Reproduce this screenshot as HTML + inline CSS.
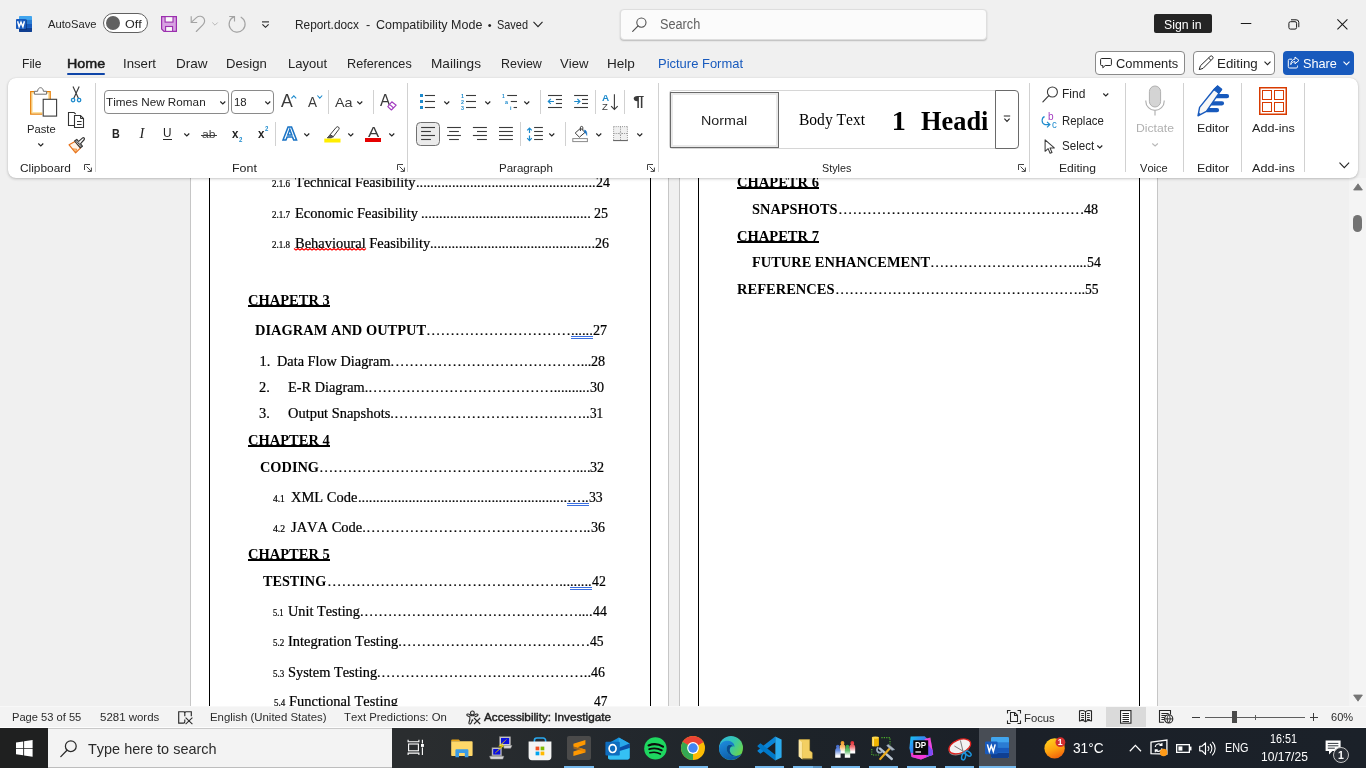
<!DOCTYPE html>
<html lang="en"><head><meta charset="utf-8"><title>Report.docx - Word</title>
<style>
*{box-sizing:border-box;margin:0;padding:0}
html,body{width:1366px;height:768px;overflow:hidden;background:#f0f0f0}
body{position:relative;font-family:"Liberation Sans",sans-serif;font-size:12px;color:#242424;font-kerning:none;will-change:transform}
div,svg,.t,main,header,section,footer,nav{position:absolute}
.t{white-space:pre;display:block;transform-origin:0 0}
svg{overflow:visible}
</style></head>
<body>
<main id="document" style="left:0;top:0;width:1366px;height:768px">
<div style="left:0px;top:178px;width:1366px;height:528px;background:#f0f0f0;"></div>
<div style="left:190px;top:150px;width:479px;height:600px;background:#fff;border:1px solid #c6c6c6;"></div>
<div style="left:679px;top:150px;width:479px;height:600px;background:#fff;border:1px solid #c6c6c6;"></div>
<div style="left:209px;top:150px;width:1px;height:600px;background:#000;"></div>
<div style="left:650px;top:150px;width:1px;height:600px;background:#000;"></div>
<div style="left:698px;top:150px;width:1px;height:600px;background:#000;"></div>
<div style="left:1139px;top:150px;width:1px;height:600px;background:#000;"></div>
<span class="t" style="left:272.20px;top:179.00px;font-size:10px;line-height:10px;font-family:'Liberation Serif',serif;color:#000;transform:scaleX(0.9000);-webkit-text-stroke:0.22px #000;">2.1.6</span>
<span class="t" style="left:295.30px;top:175.00px;font-size:14.4px;line-height:14.4px;font-family:'Liberation Serif',serif;color:#000;transform:scaleX(0.9934);-webkit-text-stroke:0.22px #000;">Technical Feasibility</span>
<span class="t" style="left:415.80px;top:175.00px;font-size:14.4px;line-height:14.4px;font-family:'Liberation Serif',serif;color:#000;transform:scaleX(0.9984);-webkit-text-stroke:0.22px #000;">..................................................</span>
<span class="t" style="left:595.60px;top:175.00px;font-size:14.4px;line-height:14.4px;font-family:'Liberation Serif',serif;color:#000;transform:scaleX(0.9659);-webkit-text-stroke:0.22px #000;">24</span>
<span class="t" style="left:272.20px;top:210.00px;font-size:10px;line-height:10px;font-family:'Liberation Serif',serif;color:#000;transform:scaleX(0.9000);-webkit-text-stroke:0.22px #000;">2.1.7</span>
<span class="t" style="left:294.50px;top:206.00px;font-size:14.4px;line-height:14.4px;font-family:'Liberation Serif',serif;color:#000;transform:scaleX(1.0016);-webkit-text-stroke:0.22px #000;">Economic Feasibility</span>
<span class="t" style="left:421.00px;top:206.00px;font-size:14.4px;line-height:14.4px;font-family:'Liberation Serif',serif;color:#000;transform:scaleX(1.0042);-webkit-text-stroke:0.22px #000;">...............................................</span>
<span class="t" style="left:594.30px;top:206.00px;font-size:14.4px;line-height:14.4px;font-family:'Liberation Serif',serif;color:#000;transform:scaleX(0.9729);-webkit-text-stroke:0.22px #000;">25</span>
<span class="t" style="left:272.20px;top:240.00px;font-size:10px;line-height:10px;font-family:'Liberation Serif',serif;color:#000;transform:scaleX(0.9000);-webkit-text-stroke:0.22px #000;">2.1.8</span>
<span class="t" style="left:294.50px;top:236.00px;font-size:14.4px;line-height:14.4px;font-family:'Liberation Serif',serif;color:#000;transform:scaleX(1.0045);-webkit-text-stroke:0.22px #000;">Behavioural Feasibility</span>
<span class="t" style="left:430.00px;top:236.00px;font-size:14.4px;line-height:14.4px;font-family:'Liberation Serif',serif;color:#000;transform:scaleX(0.9970);-webkit-text-stroke:0.22px #000;">..............................................</span>
<span class="t" style="left:595.20px;top:236.00px;font-size:14.4px;line-height:14.4px;font-family:'Liberation Serif',serif;color:#000;transform:scaleX(0.9729);-webkit-text-stroke:0.22px #000;">26</span>
<svg style="left:0px;top:0px;" width="1366" height="768" viewBox="0 0 1366 768"><polyline points="294.0 248.5 296.0 250.1 298.0 248.5 300.0 250.1 302.0 248.5 304.0 250.1 306.0 248.5 308.0 250.1 310.0 248.5 312.0 250.1 314.0 248.5 316.0 250.1 318.0 248.5 320.0 250.1 322.0 248.5 324.0 250.1 326.0 248.5 328.0 250.1 330.0 248.5 332.0 250.1 334.0 248.5 336.0 250.1 338.0 248.5 340.0 250.1 342.0 248.5 344.0 250.1 346.0 248.5 348.0 250.1 350.0 248.5 352.0 250.1 354.0 248.5 356.0 250.1 358.0 248.5 360.0 250.1 362.0 248.5 364.0 250.1 366.0 248.5" fill="none" stroke="#ff0000" stroke-width="1.15" stroke-linejoin="round"/></svg>
<span class="t" style="left:248.00px;top:293.00px;font-size:14.4px;line-height:14.4px;font-family:'Liberation Serif',serif;color:#000;font-weight:700;transform:scaleX(1.0079);">CHAPETR 3</span>
<div style="left:248px;top:305.1px;width:81.80000000000001px;height:1.8px;background:#000;"></div>
<span class="t" style="left:255.00px;top:323.00px;font-size:14.4px;line-height:14.4px;font-family:'Liberation Serif',serif;color:#000;font-weight:700;transform:scaleX(1.0053);">DIAGRAM AND OUTPUT</span>
<span class="t" style="left:426.40px;top:323.00px;font-size:14.4px;line-height:14.4px;font-family:'Liberation Serif',serif;color:#000;transform:scaleX(1.0069);-webkit-text-stroke:0.22px #000;">…………………………</span>
<span class="t" style="left:571.30px;top:323.00px;font-size:14.4px;line-height:14.4px;font-family:'Liberation Serif',serif;color:#000;transform:scaleX(1.0142);-webkit-text-stroke:0.22px #000;">......</span>
<div style="left:571px;top:336px;width:22px;height:3px;border-top:1px solid #3a6fe0;border-bottom:1px solid #3a6fe0;"></div>
<span class="t" style="left:593.40px;top:323.00px;font-size:14.4px;line-height:14.4px;font-family:'Liberation Serif',serif;color:#000;transform:scaleX(0.9868);-webkit-text-stroke:0.22px #000;">27</span>
<span class="t" style="left:259.60px;top:354.00px;font-size:14.4px;line-height:14.4px;font-family:'Liberation Serif',serif;color:#000;-webkit-text-stroke:0.22px #000;">1.</span>
<span class="t" style="left:277.30px;top:354.00px;font-size:14.4px;line-height:14.4px;font-family:'Liberation Serif',serif;color:#000;transform:scaleX(0.9932);-webkit-text-stroke:0.22px #000;">Data Flow Diagram.</span>
<span class="t" style="left:394.60px;top:354.00px;font-size:14.4px;line-height:14.4px;font-family:'Liberation Serif',serif;color:#000;transform:scaleX(0.9925);-webkit-text-stroke:0.22px #000;">…………………………………...</span>
<span class="t" style="left:591.20px;top:354.00px;font-size:14.4px;line-height:14.4px;font-family:'Liberation Serif',serif;color:#000;transform:scaleX(0.9868);-webkit-text-stroke:0.22px #000;">28</span>
<span class="t" style="left:259.00px;top:380.00px;font-size:14.4px;line-height:14.4px;font-family:'Liberation Serif',serif;color:#000;-webkit-text-stroke:0.22px #000;">2.</span>
<span class="t" style="left:287.90px;top:380.00px;font-size:14.4px;line-height:14.4px;font-family:'Liberation Serif',serif;color:#000;transform:scaleX(0.9946);-webkit-text-stroke:0.22px #000;">E-R Diagram.</span>
<span class="t" style="left:368.40px;top:380.00px;font-size:14.4px;line-height:14.4px;font-family:'Liberation Serif',serif;color:#000;transform:scaleX(0.9930);-webkit-text-stroke:0.22px #000;">…………………………………..........</span>
<span class="t" style="left:590.10px;top:380.00px;font-size:14.4px;line-height:14.4px;font-family:'Liberation Serif',serif;color:#000;transform:scaleX(0.9798);-webkit-text-stroke:0.22px #000;">30</span>
<span class="t" style="left:259.00px;top:406.00px;font-size:14.4px;line-height:14.4px;font-family:'Liberation Serif',serif;color:#000;-webkit-text-stroke:0.22px #000;">3.</span>
<span class="t" style="left:287.90px;top:406.00px;font-size:14.4px;line-height:14.4px;font-family:'Liberation Serif',serif;color:#000;transform:scaleX(1.0033);-webkit-text-stroke:0.22px #000;">Output Snapshots.</span>
<span class="t" style="left:394.00px;top:406.00px;font-size:14.4px;line-height:14.4px;font-family:'Liberation Serif',serif;color:#000;transform:scaleX(1.0068);-webkit-text-stroke:0.22px #000;">…………………………………..</span>
<span class="t" style="left:589.80px;top:406.00px;font-size:14.4px;line-height:14.4px;font-family:'Liberation Serif',serif;color:#000;transform:scaleX(0.9173);-webkit-text-stroke:0.22px #000;">31</span>
<span class="t" style="left:248.00px;top:433.00px;font-size:14.4px;line-height:14.4px;font-family:'Liberation Serif',serif;color:#000;font-weight:700;transform:scaleX(1.0079);">CHAPTER 4</span>
<div style="left:248px;top:445.1px;width:81.80000000000001px;height:1.8px;background:#000;"></div>
<span class="t" style="left:259.50px;top:460.00px;font-size:14.4px;line-height:14.4px;font-family:'Liberation Serif',serif;color:#000;font-weight:700;transform:scaleX(0.9971);">CODING</span>
<span class="t" style="left:318.70px;top:460.00px;font-size:14.4px;line-height:14.4px;font-family:'Liberation Serif',serif;color:#000;transform:scaleX(0.9930);-webkit-text-stroke:0.22px #000;">………………………………………………....</span>
<span class="t" style="left:590.40px;top:460.00px;font-size:14.4px;line-height:14.4px;font-family:'Liberation Serif',serif;color:#000;transform:scaleX(0.9798);-webkit-text-stroke:0.22px #000;">32</span>
<span class="t" style="left:272.90px;top:494.00px;font-size:10px;line-height:10px;font-family:'Liberation Serif',serif;color:#000;transform:scaleX(0.9440);-webkit-text-stroke:0.22px #000;">4.1</span>
<span class="t" style="left:291.00px;top:490.00px;font-size:14.4px;line-height:14.4px;font-family:'Liberation Serif',serif;color:#000;transform:scaleX(1.0053);-webkit-text-stroke:0.22px #000;">XML Code</span>
<span class="t" style="left:357.50px;top:490.00px;font-size:14.4px;line-height:14.4px;font-family:'Liberation Serif',serif;color:#000;transform:scaleX(1.0021);-webkit-text-stroke:0.22px #000;">..........................................................</span>
<span class="t" style="left:566.60px;top:490.00px;font-size:14.4px;line-height:14.4px;font-family:'Liberation Serif',serif;color:#000;transform:scaleX(1.0003);-webkit-text-stroke:0.22px #000;">…..</span>
<div style="left:567px;top:503px;width:22px;height:3px;border-top:1px solid #3a6fe0;border-bottom:1px solid #3a6fe0;"></div>
<span class="t" style="left:588.60px;top:490.00px;font-size:14.4px;line-height:14.4px;font-family:'Liberation Serif',serif;color:#000;transform:scaleX(0.9520);-webkit-text-stroke:0.22px #000;">33</span>
<span class="t" style="left:272.90px;top:524.00px;font-size:10px;line-height:10px;font-family:'Liberation Serif',serif;color:#000;transform:scaleX(0.9680);-webkit-text-stroke:0.22px #000;">4.2</span>
<span class="t" style="left:291.20px;top:520.00px;font-size:14.4px;line-height:14.4px;font-family:'Liberation Serif',serif;color:#000;transform:scaleX(1.0073);-webkit-text-stroke:0.22px #000;">JAVA Code.</span>
<span class="t" style="left:366.30px;top:520.00px;font-size:14.4px;line-height:14.4px;font-family:'Liberation Serif',serif;color:#000;transform:scaleX(1.0064);-webkit-text-stroke:0.22px #000;">………………………………………..</span>
<span class="t" style="left:591.00px;top:520.00px;font-size:14.4px;line-height:14.4px;font-family:'Liberation Serif',serif;color:#000;transform:scaleX(0.9729);-webkit-text-stroke:0.22px #000;">36</span>
<span class="t" style="left:248.00px;top:547.00px;font-size:14.4px;line-height:14.4px;font-family:'Liberation Serif',serif;color:#000;font-weight:700;transform:scaleX(1.0079);">CHAPTER 5</span>
<div style="left:248px;top:559.1px;width:81.80000000000001px;height:1.8px;background:#000;"></div>
<span class="t" style="left:263.40px;top:574.00px;font-size:14.4px;line-height:14.4px;font-family:'Liberation Serif',serif;color:#000;font-weight:700;transform:scaleX(0.9875);">TESTING</span>
<span class="t" style="left:326.80px;top:574.00px;font-size:14.4px;line-height:14.4px;font-family:'Liberation Serif',serif;color:#000;transform:scaleX(1.0085);-webkit-text-stroke:0.22px #000;">…………………………………………...</span>
<span class="t" style="left:569.90px;top:574.00px;font-size:14.4px;line-height:14.4px;font-family:'Liberation Serif',serif;color:#000;transform:scaleX(1.0049);-webkit-text-stroke:0.22px #000;">......</span>
<div style="left:570px;top:587px;width:22px;height:3px;border-top:1px solid #3a6fe0;border-bottom:1px solid #3a6fe0;"></div>
<span class="t" style="left:592.00px;top:574.00px;font-size:14.4px;line-height:14.4px;font-family:'Liberation Serif',serif;color:#000;transform:scaleX(0.9590);-webkit-text-stroke:0.22px #000;">42</span>
<span class="t" style="left:273.40px;top:608.00px;font-size:10px;line-height:10px;font-family:'Liberation Serif',serif;color:#000;transform:scaleX(0.8480);-webkit-text-stroke:0.22px #000;">5.1</span>
<span class="t" style="left:288.30px;top:604.00px;font-size:14.4px;line-height:14.4px;font-family:'Liberation Serif',serif;color:#000;transform:scaleX(0.9940);-webkit-text-stroke:0.22px #000;">Unit Testing.</span>
<span class="t" style="left:364.00px;top:604.00px;font-size:14.4px;line-height:14.4px;font-family:'Liberation Serif',serif;color:#000;transform:scaleX(0.9924);-webkit-text-stroke:0.22px #000;">………………………………………....</span>
<span class="t" style="left:592.70px;top:604.00px;font-size:14.4px;line-height:14.4px;font-family:'Liberation Serif',serif;color:#000;transform:scaleX(0.9590);-webkit-text-stroke:0.22px #000;">44</span>
<span class="t" style="left:273.40px;top:638.00px;font-size:10px;line-height:10px;font-family:'Liberation Serif',serif;color:#000;transform:scaleX(0.8960);-webkit-text-stroke:0.22px #000;">5.2</span>
<span class="t" style="left:288.00px;top:634.00px;font-size:14.4px;line-height:14.4px;font-family:'Liberation Serif',serif;color:#000;transform:scaleX(1.0035);-webkit-text-stroke:0.22px #000;">Integration Testing.</span>
<span class="t" style="left:402.10px;top:634.00px;font-size:14.4px;line-height:14.4px;font-family:'Liberation Serif',serif;color:#000;transform:scaleX(1.0055);-webkit-text-stroke:0.22px #000;">…………………………………</span>
<span class="t" style="left:590.40px;top:634.00px;font-size:14.4px;line-height:14.4px;font-family:'Liberation Serif',serif;color:#000;transform:scaleX(0.9451);-webkit-text-stroke:0.22px #000;">45</span>
<span class="t" style="left:273.40px;top:669.00px;font-size:10px;line-height:10px;font-family:'Liberation Serif',serif;color:#000;transform:scaleX(0.8960);-webkit-text-stroke:0.22px #000;">5.3</span>
<span class="t" style="left:288.00px;top:665.00px;font-size:14.4px;line-height:14.4px;font-family:'Liberation Serif',serif;color:#000;transform:scaleX(0.9995);-webkit-text-stroke:0.22px #000;">System Testing.</span>
<span class="t" style="left:380.90px;top:665.00px;font-size:14.4px;line-height:14.4px;font-family:'Liberation Serif',serif;color:#000;transform:scaleX(1.0064);-webkit-text-stroke:0.22px #000;">……………………………………..</span>
<span class="t" style="left:591.10px;top:665.00px;font-size:14.4px;line-height:14.4px;font-family:'Liberation Serif',serif;color:#000;transform:scaleX(0.9659);-webkit-text-stroke:0.22px #000;">46</span>
<span class="t" style="left:273.60px;top:698.00px;font-size:10px;line-height:10px;font-family:'Liberation Serif',serif;color:#000;transform:scaleX(0.8960);-webkit-text-stroke:0.22px #000;">5.4</span>
<span class="t" style="left:289.00px;top:694.00px;font-size:14.4px;line-height:14.4px;font-family:'Liberation Serif',serif;color:#000;transform:scaleX(1.0053);-webkit-text-stroke:0.22px #000;">Functional Testing</span>
<span class="t" style="left:594.00px;top:694.00px;font-size:14.4px;line-height:14.4px;font-family:'Liberation Serif',serif;color:#000;transform:scaleX(0.9312);-webkit-text-stroke:0.22px #000;">47</span>
<span class="t" style="left:736.90px;top:175.00px;font-size:14.4px;line-height:14.4px;font-family:'Liberation Serif',serif;color:#000;font-weight:700;transform:scaleX(1.0092);">CHAPETR 6</span>
<div style="left:736.9px;top:187.1px;width:81.89999999999998px;height:1.8px;background:#000;"></div>
<span class="t" style="left:751.80px;top:202.00px;font-size:14.4px;line-height:14.4px;font-family:'Liberation Serif',serif;color:#000;font-weight:700;transform:scaleX(0.9991);">SNAPSHOTS</span>
<span class="t" style="left:837.50px;top:202.00px;font-size:14.4px;line-height:14.4px;font-family:'Liberation Serif',serif;color:#000;transform:scaleX(1.0076);-webkit-text-stroke:0.22px #000;">……………………………………………</span>
<span class="t" style="left:1084.20px;top:202.00px;font-size:14.4px;line-height:14.4px;font-family:'Liberation Serif',serif;color:#000;transform:scaleX(0.9798);-webkit-text-stroke:0.22px #000;">48</span>
<span class="t" style="left:736.90px;top:229.00px;font-size:14.4px;line-height:14.4px;font-family:'Liberation Serif',serif;color:#000;font-weight:700;transform:scaleX(1.0092);">CHAPETR 7</span>
<div style="left:736.9px;top:241.1px;width:81.89999999999998px;height:1.8px;background:#000;"></div>
<span class="t" style="left:751.80px;top:255.00px;font-size:14.4px;line-height:14.4px;font-family:'Liberation Serif',serif;color:#000;font-weight:700;transform:scaleX(1.0017);">FUTURE ENHANCEMENT</span>
<span class="t" style="left:930.20px;top:255.00px;font-size:14.4px;line-height:14.4px;font-family:'Liberation Serif',serif;color:#000;transform:scaleX(0.9893);-webkit-text-stroke:0.22px #000;">…………………………....</span>
<span class="t" style="left:1087.00px;top:255.00px;font-size:14.4px;line-height:14.4px;font-family:'Liberation Serif',serif;color:#000;transform:scaleX(0.9590);-webkit-text-stroke:0.22px #000;">54</span>
<span class="t" style="left:736.90px;top:282.00px;font-size:14.4px;line-height:14.4px;font-family:'Liberation Serif',serif;color:#000;font-weight:700;transform:scaleX(1.0076);">REFERENCES</span>
<span class="t" style="left:834.60px;top:282.00px;font-size:14.4px;line-height:14.4px;font-family:'Liberation Serif',serif;color:#000;transform:scaleX(0.9935);-webkit-text-stroke:0.22px #000;">……………………………………………..</span>
<span class="t" style="left:1085.00px;top:282.00px;font-size:14.4px;line-height:14.4px;font-family:'Liberation Serif',serif;color:#000;transform:scaleX(0.9451);-webkit-text-stroke:0.22px #000;">55</span>
<div style="left:1349px;top:178px;width:17px;height:529px;background:#f4f4f4;"></div>
<svg style="left:1352.5px;top:182.5px;" width="10" height="8" viewBox="0 0 10 8"><path d="M5 0.8 L9.4 7 H0.6 Z" fill="#757575" stroke="#757575" stroke-width="0.8" stroke-linejoin="round"/></svg>
<svg style="left:1352.5px;top:693.5px;" width="10" height="8" viewBox="0 0 10 8"><path d="M5 7.2 L9.4 1 H0.6 Z" fill="#757575" stroke="#757575" stroke-width="0.8" stroke-linejoin="round"/></svg>
<div style="left:1353px;top:214.5px;width:9px;height:17.5px;background:#737373;border-radius:4.5px;"></div>
</main>
<header id="titlebar" style="left:0;top:0;width:1366px;height:768px">
<div style="left:0px;top:0px;width:1366px;height:78px;background:#f0f0f0;"></div>
<svg style="left:16px;top:16px;" width="16" height="16" viewBox="0 0 16 16">
<rect x="3" y="0" width="13" height="16" rx="0.8" fill="#41a5ee"/>
<rect x="3" y="3.9" width="13" height="4" fill="#2b7cd3"/>
<rect x="3" y="7.9" width="13" height="4" fill="#185abd"/>
<path d="M3 11.9h13v3.3a.8 .8 0 0 1-.8 .8H3.8a.8 .8 0 0 1-.8-.8z" fill="#103f91"/>
<rect x="3.4" y="3.6" width="7.6" height="10.2" fill="#0a2a66" opacity=".55"/>
<rect x="0" y="3" width="10" height="10" rx="0.8" fill="#185abd"/>
<path d="M1.6 5.2 L3.1 10.8 L5 6.2 L6.9 10.8 L8.4 5.2" fill="none" stroke="#fff" stroke-width="1.45" stroke-linejoin="miter"/>
</svg>
<span class="t" style="left:47.59px;top:19.01px;font-size:11.8px;line-height:11.8px;color:#242424;transform:scaleX(0.9477);">AutoSave</span>
<div style="left:103px;top:13px;width:45px;height:20px;background:#fff;border:1px solid #616161;border-radius:10px;"></div>
<div style="left:105.5px;top:16px;width:14px;height:14px;background:#616161;border-radius:7px;"></div>
<span class="t" style="left:124.89px;top:19.01px;font-size:11.8px;line-height:11.8px;color:#242424;transform:scaleX(1.0612);">Off</span>
<svg style="left:161px;top:15.9px;" width="16" height="16" viewBox="0 0 16 16">
<path d="M0.6 0.6h14.8v14.8h-12.4l-2.4-2.4z" fill="#d8a3e2" stroke="#9b2fae" stroke-width="1.2" stroke-linejoin="miter"/>
<rect x="4.1" y="0.6" width="7.9" height="5.5" fill="#fafafa" stroke="#9b2fae" stroke-width="1.1"/>
<rect x="4.6" y="10.5" width="7" height="4.9" fill="#fafafa" stroke="#9b2fae" stroke-width="1.1"/>
</svg>
<svg style="left:190px;top:15px;" width="16" height="18" viewBox="0 0 16 18">
<path d="M1.2 1.3v6.2h6" fill="none" stroke="#a3a3a3" stroke-width="1.15"/>
<path d="M1.5 7.2 L6.4 2.6 C9 0.4 12.6 1 14 3.6 C15.2 6 14.4 8.4 12.6 10.2 L6.3 16.5" fill="none" stroke="#a3a3a3" stroke-width="1.15" stroke-linecap="round"/>
</svg>
<svg style="left:212px;top:21.5px;" width="6" height="4" viewBox="0 0 6 4"><path d="M0.3 0.5 L3 3.2 L5.7 0.5" fill="none" stroke="#b8b8b8" stroke-width="1"/></svg>
<svg style="left:228px;top:15px;" width="18" height="18" viewBox="0 0 18 18">
<path d="M1.2 1.5h5.3v5.1" fill="none" stroke="#a3a3a3" stroke-width="1.15"/>
<path d="M13.1 2.2 A8 8 0 1 1 6.4 1.6" fill="none" stroke="#a3a3a3" stroke-width="1.15" stroke-linecap="round"/>
</svg>
<svg style="left:261px;top:20.5px;" width="9" height="7" viewBox="0 0 9 7"><path d="M1 0.9h7" stroke="#242424" stroke-width="1.1"/><path d="M1.4 3.3 L4.5 6.3 L7.6 3.3" fill="none" stroke="#242424" stroke-width="1.15"/></svg>
<span class="t" style="left:294.64px;top:19.01px;font-size:12.6px;line-height:12.6px;color:#242424;transform:scaleX(0.9423);">Report.docx</span>
<span class="t" style="left:365.90px;top:19.01px;font-size:12.6px;line-height:12.6px;color:#242424;">-</span>
<span class="t" style="left:375.84px;top:19.01px;font-size:12.6px;line-height:12.6px;color:#242424;transform:scaleX(0.9934);">Compatibility Mode</span>
<span class="t" style="left:487.80px;top:20.00px;font-size:11px;line-height:11px;color:#242424;">•</span>
<span class="t" style="left:496.64px;top:19.01px;font-size:12.6px;line-height:12.6px;color:#242424;transform:scaleX(0.8675);">Saved</span>
<svg style="left:533px;top:21px;" width="10" height="7" viewBox="0 0 10 7"><path d="M0.5 0.8 L5 5.6 L9.5 0.8" fill="none" stroke="#242424" stroke-width="1.1"/></svg>
<div style="left:619.5px;top:8.5px;width:367px;height:31px;background:#fbfbfb;border:1px solid #dedede;border-radius:4px;box-shadow:0 1px 1.5px rgba(0,0,0,.22);"></div>
<svg style="left:632px;top:16.5px;" width="16" height="15" viewBox="0 0 16 15"><circle cx="9.4" cy="5.6" r="4.6" fill="none" stroke="#505050" stroke-width="1.1"/><path d="M6.1 8.9 L0.7 14.3" stroke="#505050" stroke-width="1.2" stroke-linecap="round"/></svg>
<span class="t" style="left:660.07px;top:18.01px;font-size:13.8px;line-height:13.8px;color:#616161;transform:scaleX(0.9199);">Search</span>
<div style="left:1154px;top:14px;width:58px;height:19px;background:#242424;border-radius:2px;"></div>
<span class="t" style="left:1164.06px;top:19.01px;font-size:12.3px;line-height:12.3px;color:#fff;transform:scaleX(0.9985);">Sign in</span>
<svg style="left:1240px;top:22px;" width="12" height="3" viewBox="0 0 12 3"><path d="M0.8 1.5h10.5" stroke="#1a1a1a" stroke-width="1"/></svg>
<svg style="left:1288px;top:19px;" width="12" height="11" viewBox="0 0 12 11"><rect x="0.9" y="2.7" width="7.7" height="7.4" rx="1.6" fill="none" stroke="#1a1a1a" stroke-width="1"/><path d="M3 0.8h5.2a2.6 2.6 0 0 1 2.6 2.6v4.8" fill="none" stroke="#1a1a1a" stroke-width="1"/></svg>
<svg style="left:1337px;top:18.5px;" width="11" height="11" viewBox="0 0 11 11"><path d="M0.4 0.4 L10.4 10.4 M10.4 0.4 L0.4 10.4" stroke="#1a1a1a" stroke-width="1.05"/></svg>
<span class="t" style="left:21.52px;top:57.00px;font-size:13px;line-height:13px;color:#242424;transform:scaleX(0.9321);">File</span>
<span class="t" style="left:123.42px;top:57.00px;font-size:13px;line-height:13px;color:#242424;transform:scaleX(1.0158);">Insert</span>
<span class="t" style="left:176.42px;top:57.00px;font-size:13px;line-height:13px;color:#242424;transform:scaleX(1.0391);">Draw</span>
<span class="t" style="left:226.42px;top:57.00px;font-size:13px;line-height:13px;color:#242424;transform:scaleX(1.0065);">Design</span>
<span class="t" style="left:287.62px;top:57.00px;font-size:13px;line-height:13px;color:#242424;transform:scaleX(0.9996);">Layout</span>
<span class="t" style="left:346.62px;top:57.00px;font-size:13px;line-height:13px;color:#242424;transform:scaleX(0.9736);">References</span>
<span class="t" style="left:430.52px;top:57.00px;font-size:13px;line-height:13px;color:#242424;transform:scaleX(1.0491);">Mailings</span>
<span class="t" style="left:500.62px;top:57.00px;font-size:13px;line-height:13px;color:#242424;transform:scaleX(0.9579);">Review</span>
<span class="t" style="left:560.02px;top:57.00px;font-size:13px;line-height:13px;color:#242424;transform:scaleX(1.0086);">View</span>
<span class="t" style="left:607.32px;top:57.00px;font-size:13px;line-height:13px;color:#242424;transform:scaleX(1.0441);">Help</span>
<span class="t" style="left:66.52px;top:57.00px;font-size:13px;line-height:13px;color:#1a1a1a;transform:scaleX(1.0992);-webkit-text-stroke:0.5px #1a1a1a;">Home</span>
<div style="left:67.2px;top:73px;width:37.8px;height:2.2px;background:#0f45a8;border-radius:1px;"></div>
<span class="t" style="left:657.52px;top:57.00px;font-size:13px;line-height:13px;color:#185abd;transform:scaleX(0.9974);">Picture Format</span>
<div style="left:1095px;top:51px;width:90px;height:24px;background:#fff;border:1px solid #8a8a8a;border-radius:4px;"></div>
<svg style="left:1100px;top:57px;" width="12" height="12" viewBox="0 0 12 12"><path d="M1.6 1.5h8.8a1 1 0 0 1 1 1v5a1 1 0 0 1-1 1H5.2L2.8 10.8V8.5H1.6a1 1 0 0 1-1-1v-5a1 1 0 0 1 1-1z" fill="none" stroke="#242424" stroke-width="1"/></svg>
<span class="t" style="left:1115.82px;top:57.00px;font-size:13px;line-height:13px;color:#242424;transform:scaleX(0.9900);">Comments</span>
<div style="left:1193px;top:51px;width:82px;height:24px;background:#fff;border:1px solid #8a8a8a;border-radius:4px;"></div>
<svg style="left:1198px;top:55px;" width="17" height="16" viewBox="0 0 17 16"><path d="M12.2 1.4 a1.7 1.7 0 0 1 2.4 2.4 L5 13.4 L1.2 14.6 L2.4 10.8 Z M10.6 3 L13 5.4" fill="none" stroke="#242424" stroke-width="1" stroke-linejoin="round"/></svg>
<span class="t" style="left:1217.42px;top:57.00px;font-size:13px;line-height:13px;color:#242424;transform:scaleX(1.0247);">Editing</span>
<svg style="left:1264px;top:61px;" width="7" height="5" viewBox="0 0 7 5"><path d="M0.5 0.7 L3.5 3.7 L6.5 0.7" fill="none" stroke="#242424" stroke-width="1.1"/></svg>
<div style="left:1283px;top:51px;width:71px;height:24px;background:#185abd;border-radius:4px;"></div>
<svg style="left:1287px;top:56px;" width="13" height="13" viewBox="0 0 13 13"><path d="M5 3.2H2.6a1.3 1.3 0 0 0-1.3 1.3v6.2a1.3 1.3 0 0 0 1.3 1.3h6.6a1.3 1.3 0 0 0 1.3-1.3V9.6" fill="none" stroke="#fff" stroke-width="1"/><path d="M8 1 L12 4.4 L8 7.8 V5.7 C5.8 5.7 4.6 6.6 3.8 8.6 C3.9 5.4 5.4 3.4 8 3.1 Z" fill="none" stroke="#fff" stroke-width="1" stroke-linejoin="round"/></svg>
<span class="t" style="left:1303.22px;top:57.00px;font-size:13px;line-height:13px;color:#fff;transform:scaleX(0.9777);">Share</span>
<svg style="left:1343px;top:61px;" width="7" height="5" viewBox="0 0 7 5"><path d="M0.5 0.7 L3.5 3.7 L6.5 0.7" fill="none" stroke="#fff" stroke-width="1.1"/></svg>
</header>
<section id="ribbon" style="left:0;top:0;width:1366px;height:768px">
<div style="left:8px;top:78px;width:1350px;height:100px;background:#fff;border-radius:8px;box-shadow:0 1px 3px rgba(0,0,0,.22),0 0 1px rgba(0,0,0,.12);"></div>
<svg style="left:29px;top:86px;" width="29" height="31" viewBox="0 0 29 31">
<path d="M1.6 5.6h19.6v8h-7.6v14.6H1.6z" fill="#fff"/>
<path d="M5.6 7H3v19.8h10.4 M17.2 7h2.6v6.2" fill="none" stroke="#fbe2a0" stroke-width="1.5"/>
<path d="M5.6 5.6H1.7v22.6h11.6 M17.2 5.6h4v7.6" fill="none" stroke="#e8830c" stroke-width="1.3"/>
<path d="M5.4 8.2V5.3h3.2c.1-2.2 1.3-3.6 2.9-3.6s2.8 1.4 2.9 3.6h3.2v2.9z" fill="#fff" stroke="#6e6e6e" stroke-width="1"/>
<rect x="14.2" y="13.3" width="13.4" height="16.8" fill="#fff" stroke="#3b3b3b" stroke-width="1.1"/>
</svg>
<span class="t" style="left:26.82px;top:124.00px;font-size:11.4px;line-height:11.4px;color:#242424;transform:scaleX(0.9833);">Paste</span>
<svg style="left:37.7px;top:142.6px;" width="5.6" height="4" viewBox="0 0 5.6 4"><path d="M0.3 0.5 L2.8 3 L5.3 0.5" fill="none" stroke="#242424" stroke-width="1.1"/></svg>
<svg style="left:70px;top:86px;" width="12" height="17" viewBox="0 0 12 17">
<path d="M3 0.5 L8.4 12.2 M9.2 0.5 L3.8 12.2" fill="none" stroke="#3b3b3b" stroke-width="1.15"/>
<circle cx="3.1" cy="14.1" r="1.7" fill="#fff" stroke="#1e8bcd" stroke-width="1.3"/>
<circle cx="9.1" cy="14.1" r="1.7" fill="#fff" stroke="#1e8bcd" stroke-width="1.3"/>
</svg>
<svg style="left:68px;top:112px;" width="17" height="16" viewBox="0 0 17 16">
<path d="M6.5 13.5H0.5V0.5h5.6l1.6 1.6" fill="none" stroke="#333" stroke-width="1.1" stroke-linejoin="miter"/>
<path d="M6.5 3.5h6l3 3v9h-9z" fill="#fff" stroke="#333" stroke-width="1.1" stroke-linejoin="miter"/>
<path d="M12.5 3.7v2.8h2.8" fill="none" stroke="#333" stroke-width="1"/>
<path d="M9 9.5h4.6 M9 12.5h4.6" stroke="#333" stroke-width="1"/>
</svg>
<svg style="left:67.5px;top:137px;" width="18" height="17" viewBox="0 0 18 17">
<path d="M1.1 7.8 L7 4.4 L12.6 10.8 L7.6 15.8 Z" fill="#fff3e6" stroke="#e8711a" stroke-width="1.2" stroke-linejoin="round"/>
<path d="M4.6 11.8 L8.8 12.2 L7.6 15.2 Z" fill="#fbd28a" stroke="#e8711a" stroke-width="0.7" stroke-linejoin="round"/>
<path d="M6.6 4 L8.8 2.4 L14.4 9.2 L12.4 10.9 Z" fill="#fff" stroke="#333" stroke-width="1.15" stroke-linejoin="round"/>
<path d="M7.8 3.3 L13.4 10" stroke="#333" stroke-width="0.9"/>
<path d="M10.4 4.6 L14.6 0.9 a1.2 1.2 0 0 1 1.7 1.6 L12.4 6.9" fill="#fff" stroke="#333" stroke-width="1.15" stroke-linejoin="round"/>
</svg>
<span class="t" style="left:19.90px;top:162.01px;font-size:11.6px;line-height:11.6px;color:#242424;transform:scaleX(1.0252);">Clipboard</span>
<svg style="left:84.2px;top:164px;" width="8" height="8" viewBox="0 0 8 8"><path d="M0.5 6V0.5H6" fill="none" stroke="#424242" stroke-width="1"/><path d="M2.6 2.6 L7.2 7.2 M7.4 3.6 V7.4 H3.6" fill="none" stroke="#424242" stroke-width="1"/></svg>
<div style="left:95px;top:83px;width:1px;height:89px;background:#d1d1d1;"></div>
<div style="left:104px;top:90px;width:125px;height:24px;background:#fff;border:1px solid #8a8a8a;border-radius:4px;"></div>
<span class="t" style="left:106.40px;top:96.01px;font-size:11.6px;line-height:11.6px;color:#242424;transform:scaleX(1.0111);">Times New Roman</span>
<svg style="left:219.9px;top:101.2px;" width="5.6" height="4" viewBox="0 0 5.6 4"><path d="M0.3 0.5 L2.8 3 L5.3 0.5" fill="none" stroke="#242424" stroke-width="1.1"/></svg>
<div style="left:231px;top:90px;width:43px;height:24px;background:#fff;border:1px solid #8a8a8a;border-radius:4px;"></div>
<span class="t" style="left:233.90px;top:96.01px;font-size:11.6px;line-height:11.6px;color:#242424;transform:scaleX(0.9822);">18</span>
<svg style="left:264.6px;top:101.2px;" width="5.6" height="4" viewBox="0 0 5.6 4"><path d="M0.3 0.5 L2.8 3 L5.3 0.5" fill="none" stroke="#242424" stroke-width="1.1"/></svg>
<span class="t" style="left:280.60px;top:92.01px;font-size:18.3px;line-height:18.3px;color:#3b3b3b;transform:scaleX(0.9670);">A</span>
<svg style="left:290.8px;top:94.6px;" width="6" height="4" viewBox="0 0 6 4"><path d="M0.4 3.4 L2.8 0.8 L5.2 3.4" fill="none" stroke="#1e8bcd" stroke-width="1.1"/></svg>
<span class="t" style="left:308.40px;top:95.01px;font-size:14.6px;line-height:14.6px;color:#3b3b3b;transform:scaleX(0.9246);">A</span>
<svg style="left:316.6px;top:95px;" width="6" height="4" viewBox="0 0 6 4"><path d="M0.4 0.5 L2.8 3.1 L5.2 0.5" fill="none" stroke="#1e8bcd" stroke-width="1.1"/></svg>
<div style="left:328px;top:90px;width:1px;height:24px;background:#d1d1d1;"></div>
<span class="t" style="left:334.60px;top:96.00px;font-size:13.4px;line-height:13.4px;color:#3b3b3b;transform:scaleX(1.0722);">Aa</span>
<svg style="left:356.8px;top:101.2px;" width="5.6" height="4" viewBox="0 0 5.6 4"><path d="M0.3 0.5 L2.8 3 L5.3 0.5" fill="none" stroke="#242424" stroke-width="1.1"/></svg>
<div style="left:373px;top:90px;width:1px;height:24px;background:#d1d1d1;"></div>
<span class="t" style="left:379.80px;top:92.01px;font-size:17.2px;line-height:17.2px;color:#3b3b3b;transform:scaleX(0.9068);">A</span>
<svg style="left:386.5px;top:100.5px;" width="10" height="10" viewBox="0 0 10 10"><path d="M4.8 0.8 L9.2 4.2 L4.4 9 L0.8 5.6 Z M2.6 3.4 L6.6 7" fill="#fff" stroke="#a33cc0" stroke-width="1.1" stroke-linejoin="round"/></svg>
<span class="t" style="left:112.40px;top:127.00px;font-size:13.4px;line-height:13.4px;color:#242424;font-weight:700;transform:scaleX(0.8065);">B</span>
<span class="t" style="left:139.60px;top:127.00px;font-size:13.4px;line-height:13.4px;font-family:'Liberation Serif',serif;color:#242424;font-style:italic;font-size:14.5px;">I</span>
<span class="t" style="left:163.20px;top:127.01px;font-size:12.8px;line-height:12.8px;color:#242424;transform:scaleX(0.9189);">U</span>
<div style="left:163px;top:139px;width:9px;height:1px;background:#242424;"></div>
<svg style="left:183.6px;top:132.9px;" width="5.6" height="4" viewBox="0 0 5.6 4"><path d="M0.3 0.5 L2.8 3 L5.3 0.5" fill="none" stroke="#242424" stroke-width="1.1"/></svg>
<span class="t" style="left:202.29px;top:129.01px;font-size:11.8px;line-height:11.8px;color:#444;transform:scaleX(1.0284);">ab</span>
<div style="left:201px;top:134.8px;width:15.8px;height:1px;background:#3b3b3b;"></div>
<span class="t" style="left:231.80px;top:127.01px;font-size:13.6px;line-height:13.6px;color:#242424;font-weight:700;transform:scaleX(0.8463);">x</span>
<span class="t" style="left:238.80px;top:136.00px;font-size:7px;line-height:7px;color:#1e8bcd;font-weight:700;transform:scaleX(0.8704);">2</span>
<span class="t" style="left:257.60px;top:127.01px;font-size:13.6px;line-height:13.6px;color:#242424;font-weight:700;transform:scaleX(0.8463);">x</span>
<span class="t" style="left:264.60px;top:125.00px;font-size:7px;line-height:7px;color:#1e8bcd;font-weight:700;transform:scaleX(0.8704);">2</span>
<div style="left:275px;top:122px;width:1px;height:24px;background:#d1d1d1;"></div>
<svg style="left:281px;top:124px" width="18" height="18" viewBox="0 0 18 18"><text x="1.6" y="15.8" font-family="Liberation Sans,sans-serif" font-weight="700" font-size="18.4" fill="#fff" stroke="#1b74c5" stroke-width="1.4" textLength="14.6" lengthAdjust="spacingAndGlyphs">A</text></svg>
<svg style="left:303.8px;top:132.9px;" width="5.6" height="4" viewBox="0 0 5.6 4"><path d="M0.3 0.5 L2.8 3 L5.3 0.5" fill="none" stroke="#242424" stroke-width="1.1"/></svg>
<svg style="left:323.5px;top:125.5px;" width="17" height="17" viewBox="0 0 17 17">
<path d="M6.2 8.6 L12.2 1.4 a1.6 1.6 0 0 1 2.6 2 L9.2 10.8 Z" fill="#fff" stroke="#3b3b3b" stroke-width="1"/>
<path d="M6.2 8.6 L9.2 10.8 L7 12 L3.2 12 Z" fill="#5a5a5a" stroke="#3b3b3b" stroke-width="0.8" stroke-linejoin="round"/>
<rect x="0.3" y="12.6" width="16.2" height="3.9" fill="#ffee00"/>
</svg>
<svg style="left:347.5px;top:132.9px;" width="5.6" height="4" viewBox="0 0 5.6 4"><path d="M0.3 0.5 L2.8 3 L5.3 0.5" fill="none" stroke="#242424" stroke-width="1.1"/></svg>
<span class="t" style="left:367.60px;top:125.00px;font-size:14.4px;line-height:14.4px;color:#3b3b3b;transform:scaleX(1.1655);">A</span>
<div style="left:364.9px;top:138px;width:16.2px;height:4px;background:#e60000;"></div>
<svg style="left:388.5px;top:132.9px;" width="5.6" height="4" viewBox="0 0 5.6 4"><path d="M0.3 0.5 L2.8 3 L5.3 0.5" fill="none" stroke="#242424" stroke-width="1.1"/></svg>
<span class="t" style="left:231.70px;top:162.01px;font-size:11.6px;line-height:11.6px;color:#242424;transform:scaleX(1.0721);">Font</span>
<svg style="left:396.6px;top:164px;" width="8" height="8" viewBox="0 0 8 8"><path d="M0.5 6V0.5H6" fill="none" stroke="#424242" stroke-width="1"/><path d="M2.6 2.6 L7.2 7.2 M7.4 3.6 V7.4 H3.6" fill="none" stroke="#424242" stroke-width="1"/></svg>
<div style="left:407px;top:83px;width:1px;height:89px;background:#d1d1d1;"></div>
<div style="left:416px;top:122px;width:24px;height:24px;background:#ebebeb;border:1px solid #707070;border-radius:4.5px;"></div>
<svg style="left:0px;top:0px;" width="1366" height="180" viewBox="0 0 1366 180"><rect x="420" y="94.0" width="3" height="3" fill="#1e8bcd"/><path d="M424.9 95.5H435" stroke="#3b3b3b" stroke-width="1.1"/><rect x="420" y="100.0" width="3" height="3" fill="#1e8bcd"/><path d="M424.9 101.5H435" stroke="#3b3b3b" stroke-width="1.1"/><rect x="420" y="106.0" width="3" height="3" fill="#1e8bcd"/><path d="M424.9 107.5H435" stroke="#3b3b3b" stroke-width="1.1"/><path d="M466 95.5H476" stroke="#3b3b3b" stroke-width="1.1"/><path d="M466 101.5H476" stroke="#3b3b3b" stroke-width="1.1"/><path d="M466 107.5H476" stroke="#3b3b3b" stroke-width="1.1"/><path d="M507.2 95.5H517" stroke="#3b3b3b" stroke-width="1.1"/><path d="M510.8 101.5H517" stroke="#3b3b3b" stroke-width="1.1"/><path d="M513.6 107.5H517" stroke="#3b3b3b" stroke-width="1.1"/><path d="M548 95.5H562" stroke="#3b3b3b" stroke-width="1.1"/><path d="M548 107.5H562" stroke="#3b3b3b" stroke-width="1.1"/><path d="M555.9 99.5H562" stroke="#3b3b3b" stroke-width="1.1"/><path d="M555.9 103.5H562" stroke="#3b3b3b" stroke-width="1.1"/><path d="M548.4 101.5H554 M550.8 98.9 L548.3 101.5 L550.8 103.9" fill="none" stroke="#1e8bcd" stroke-width="1.2"/><path d="M574.1 95.5H588" stroke="#3b3b3b" stroke-width="1.1"/><path d="M574.1 107.5H588" stroke="#3b3b3b" stroke-width="1.1"/><path d="M582 99.5H588" stroke="#3b3b3b" stroke-width="1.1"/><path d="M582 103.5H588" stroke="#3b3b3b" stroke-width="1.1"/><path d="M574.2 101.5H579.8 M577.4 98.9 L579.9 101.5 L577.4 103.9" fill="none" stroke="#1e8bcd" stroke-width="1.2"/><path d="M614.4 94.2V109.4 M611.1 106.1 L614.4 109.5 L617.7 106.1" fill="none" stroke="#3b3b3b" stroke-width="1.1"/><path d="M421.1 127.5H435" stroke="#3b3b3b" stroke-width="1.1"/><path d="M421.1 131.5H430.9" stroke="#3b3b3b" stroke-width="1.1"/><path d="M421.1 135.5H435" stroke="#3b3b3b" stroke-width="1.1"/><path d="M421.1 139.5H430.9" stroke="#3b3b3b" stroke-width="1.1"/><path d="M447.1 127.5H460.9" stroke="#3b3b3b" stroke-width="1.1"/><path d="M449.1 131.5H458.9" stroke="#3b3b3b" stroke-width="1.1"/><path d="M447.1 135.5H460.9" stroke="#3b3b3b" stroke-width="1.1"/><path d="M449.1 139.5H458.9" stroke="#3b3b3b" stroke-width="1.1"/><path d="M472.9 127.5H486.9" stroke="#3b3b3b" stroke-width="1.1"/><path d="M477 131.5H486.9" stroke="#3b3b3b" stroke-width="1.1"/><path d="M472.9 135.5H486.9" stroke="#3b3b3b" stroke-width="1.1"/><path d="M477 139.5H486.9" stroke="#3b3b3b" stroke-width="1.1"/><path d="M499 127.5H512.9" stroke="#3b3b3b" stroke-width="1.1"/><path d="M499 131.5H512.9" stroke="#3b3b3b" stroke-width="1.1"/><path d="M499 135.5H512.9" stroke="#3b3b3b" stroke-width="1.1"/><path d="M499 139.5H512.9" stroke="#3b3b3b" stroke-width="1.1"/><path d="M534.1 127.5H542.9" stroke="#3b3b3b" stroke-width="1.1"/><path d="M534.1 131.5H542.9" stroke="#3b3b3b" stroke-width="1.1"/><path d="M534.1 135.5H542.9" stroke="#3b3b3b" stroke-width="1.1"/><path d="M534.1 139.5H542.9" stroke="#3b3b3b" stroke-width="1.1"/><path d="M529.5 128V133 M527.2 130.4 L529.5 128 L531.8 130.4 M529.5 135.6V140.6 M527.2 138.2 L529.5 140.6 L531.8 138.2" fill="none" stroke="#1e8bcd" stroke-width="1.2"/><path d="M580.6 128.2 L575.2 133 L579.4 137.2 L585 132.4 Z" fill="#fff" stroke="#3b3b3b" stroke-width="1" stroke-linejoin="round"/><path d="M580.4 131 V127.6 a1.2 1.2 0 0 1 2.4 0 V130" fill="none" stroke="#3b3b3b" stroke-width="1"/><path d="M584.6 130 C586.4 130.4 587 132.4 586.8 135.4 C586.2 133.6 585.6 132.8 584.6 132.4 Z" fill="#1b74c5" stroke="#1b74c5" stroke-width="0.6"/><rect x="572.8" y="138.6" width="14.6" height="3" fill="#fff" stroke="#8a8a8a" stroke-width="1"/><rect x="613.6" y="126.6" width="13.8" height="13.8" fill="#f0f0f0"/><path d="M613.6 126.6H627.4 M613.6 133.5H627.4 M613.6 126.6V140 M620.5 126.6V140 M627.4 126.6V140" fill="none" stroke="#8a8a8a" stroke-width="0.9" stroke-dasharray="1 1.1"/><circle cx="620.5" cy="133.5" r="0.9" fill="#fff" stroke="#8a8a8a" stroke-width="0.6"/><path d="M613.1 140.6H627.9" stroke="#5a5a5a" stroke-width="1"/></svg>
<span class="t" style="left:460.80px;top:94.01px;font-size:5.6px;line-height:5.6px;color:#1e8bcd;font-weight:700;transform:scaleX(0.9600);">1</span>
<span class="t" style="left:460.80px;top:100.01px;font-size:5.6px;line-height:5.6px;color:#1e8bcd;font-weight:700;transform:scaleX(0.9600);">2</span>
<span class="t" style="left:460.80px;top:106.01px;font-size:5.6px;line-height:5.6px;color:#1e8bcd;font-weight:700;transform:scaleX(0.9600);">3</span>
<span class="t" style="left:502.00px;top:94.01px;font-size:5.6px;line-height:5.6px;color:#1e8bcd;font-weight:700;transform:scaleX(0.8960);">1</span>
<span class="t" style="left:504.70px;top:99.00px;font-size:6px;line-height:6px;color:#1e8bcd;font-weight:700;transform:scaleX(0.8972);">a</span>
<span class="t" style="left:509.90px;top:105.00px;font-size:6px;line-height:6px;color:#1e8bcd;font-weight:700;transform:scaleX(0.8972);">i</span>
<svg style="left:443.7px;top:101.2px;" width="5.6" height="4" viewBox="0 0 5.6 4"><path d="M0.3 0.5 L2.8 3 L5.3 0.5" fill="none" stroke="#242424" stroke-width="1.1"/></svg>
<svg style="left:484.7px;top:101.2px;" width="5.6" height="4" viewBox="0 0 5.6 4"><path d="M0.3 0.5 L2.8 3 L5.3 0.5" fill="none" stroke="#242424" stroke-width="1.1"/></svg>
<svg style="left:523.7px;top:101.2px;" width="5.6" height="4" viewBox="0 0 5.6 4"><path d="M0.3 0.5 L2.8 3 L5.3 0.5" fill="none" stroke="#242424" stroke-width="1.1"/></svg>
<div style="left:540px;top:90px;width:1px;height:24px;background:#d1d1d1;"></div>
<div style="left:595px;top:90px;width:1px;height:24px;background:#d1d1d1;"></div>
<span class="t" style="left:601.80px;top:93.01px;font-size:9.6px;line-height:9.6px;color:#1e8bcd;font-weight:700;transform:scaleX(1.0378);">A</span>
<span class="t" style="left:602.00px;top:103.01px;font-size:8.6px;line-height:8.6px;color:#3b3b3b;transform:scaleX(1.1048);">Z</span>
<div style="left:624px;top:90px;width:1px;height:24px;background:#d1d1d1;"></div>
<span class="t" style="left:633.40px;top:94.01px;font-size:14.6px;line-height:14.6px;color:#3b3b3b;font-weight:700;transform:scaleX(1.4031);">¶</span>
<div style="left:520px;top:122px;width:1px;height:24px;background:#d1d1d1;"></div>
<svg style="left:548.7px;top:132.9px;" width="5.6" height="4" viewBox="0 0 5.6 4"><path d="M0.3 0.5 L2.8 3 L5.3 0.5" fill="none" stroke="#242424" stroke-width="1.1"/></svg>
<div style="left:565px;top:122px;width:1px;height:24px;background:#d1d1d1;"></div>
<svg style="left:595.7px;top:132.9px;" width="5.6" height="4" viewBox="0 0 5.6 4"><path d="M0.3 0.5 L2.8 3 L5.3 0.5" fill="none" stroke="#242424" stroke-width="1.1"/></svg>
<svg style="left:636.7px;top:132.9px;" width="5.6" height="4" viewBox="0 0 5.6 4"><path d="M0.3 0.5 L2.8 3 L5.3 0.5" fill="none" stroke="#242424" stroke-width="1.1"/></svg>
<span class="t" style="left:498.70px;top:162.01px;font-size:11.6px;line-height:11.6px;color:#242424;transform:scaleX(0.9948);">Paragraph</span>
<svg style="left:646.8px;top:164px;" width="8" height="8" viewBox="0 0 8 8"><path d="M0.5 6V0.5H6" fill="none" stroke="#424242" stroke-width="1"/><path d="M2.6 2.6 L7.2 7.2 M7.4 3.6 V7.4 H3.6" fill="none" stroke="#424242" stroke-width="1"/></svg>
<div style="left:658px;top:83px;width:1px;height:89px;background:#d1d1d1;"></div>
<div style="left:668.5px;top:90px;width:327px;height:59px;background:#fff;border-top:1px solid #d6d6d6;border-bottom:1px solid #d6d6d6;border-left:1px solid #d6d6d6;border-radius:4px 0 0 4px;"></div>
<div style="left:669.5px;top:91.5px;width:109px;height:56px;background:#fff;border:1px solid #6a6a6a;box-shadow:inset 0 0 0 2px #e9e9e9;"></div>
<span class="t" style="left:700.72px;top:114.00px;font-size:13px;line-height:13px;color:#242424;transform:scaleX(1.1008);">Normal</span>
<span class="t" style="left:798.80px;top:112.01px;font-size:15.8px;line-height:15.8px;font-family:'Liberation Serif',serif;color:#000;transform:scaleX(0.9830);">Body Text</span>
<span class="t" style="left:891.80px;top:107.01px;font-size:28.2px;line-height:28.2px;font-family:'Liberation Serif',serif;color:#000;font-weight:700;">1</span>
<span class="t" style="left:920.60px;top:107.01px;font-size:28.2px;line-height:28.2px;font-family:'Liberation Serif',serif;color:#000;font-weight:700;transform:scaleX(0.9355);">Headi</span>
<div style="left:995px;top:90px;width:24px;height:59px;background:#fff;border:1px solid #6a6a6a;border-radius:0 4px 4px 0;"></div>
<svg style="left:1003px;top:115px;" width="8" height="8" viewBox="0 0 8 8"><path d="M0.8 1H7.2" stroke="#242424" stroke-width="1"/><path d="M1.4 3.6 L4 6.4 L6.6 3.6" fill="none" stroke="#242424" stroke-width="1.1"/></svg>
<span class="t" style="left:821.80px;top:162.01px;font-size:11.6px;line-height:11.6px;color:#242424;transform:scaleX(0.9271);">Styles</span>
<svg style="left:1018.4px;top:164px;" width="8" height="8" viewBox="0 0 8 8"><path d="M0.5 6V0.5H6" fill="none" stroke="#424242" stroke-width="1"/><path d="M2.6 2.6 L7.2 7.2 M7.4 3.6 V7.4 H3.6" fill="none" stroke="#424242" stroke-width="1"/></svg>
<div style="left:1029px;top:83px;width:1px;height:89px;background:#d1d1d1;"></div>
<svg style="left:1042px;top:86px;" width="17" height="17" viewBox="0 0 17 17"><circle cx="10.4" cy="6" r="5" fill="none" stroke="#3b3b3b" stroke-width="1.1"/><path d="M6.8 9.7 L0.9 15.8" stroke="#3b3b3b" stroke-width="1.2" stroke-linecap="round"/></svg>
<span class="t" style="left:1061.88px;top:88.00px;font-size:12px;line-height:12px;color:#242424;transform:scaleX(0.9990);">Find</span>
<svg style="left:1102.9px;top:93.3px;" width="5.6" height="4" viewBox="0 0 5.6 4"><path d="M0.3 0.5 L2.8 3 L5.3 0.5" fill="none" stroke="#242424" stroke-width="1.1"/></svg>
<span class="t" style="left:1047.70px;top:112.00px;font-size:10.4px;line-height:10.4px;color:#a33cc0;transform:scaleX(0.9686);">b</span>
<span class="t" style="left:1051.60px;top:120.00px;font-size:10.4px;line-height:10.4px;color:#1e8bcd;transform:scaleX(0.9225);">c</span>
<svg style="left:1040px;top:114px;" width="12" height="15" viewBox="0 0 12 15"><path d="M4.6 2.6 C1.4 3.6 1 9.6 5 10.6 H9.6 M7 7.9 L9.9 10.6 L7 13.4" fill="none" stroke="#1e8bcd" stroke-width="1.15"/></svg>
<span class="t" style="left:1061.88px;top:115.00px;font-size:12px;line-height:12px;color:#242424;transform:scaleX(0.9475);">Replace</span>
<svg style="left:1043.5px;top:138.5px;" width="12" height="16" viewBox="0 0 12 16"><path d="M1.1 0.9 V12.3 L4.1 9.6 L6.1 14.3 L8 13.5 L6 8.9 L10.3 8.9 Z" fill="#fff" stroke="#3b3b3b" stroke-width="1.05" stroke-linejoin="round"/></svg>
<span class="t" style="left:1061.88px;top:140.00px;font-size:12px;line-height:12px;color:#242424;transform:scaleX(0.9658);">Select</span>
<svg style="left:1096.7px;top:145.2px;" width="5.6" height="4" viewBox="0 0 5.6 4"><path d="M0.3 0.5 L2.8 3 L5.3 0.5" fill="none" stroke="#242424" stroke-width="1.1"/></svg>
<span class="t" style="left:1059.10px;top:162.01px;font-size:11.6px;line-height:11.6px;color:#242424;transform:scaleX(1.0430);">Editing</span>
<div style="left:1125px;top:83px;width:1px;height:89px;background:#d1d1d1;"></div>
<svg style="left:1145px;top:85px;" width="20" height="32" viewBox="0 0 20 32">
<rect x="4.4" y="1" width="11.2" height="21" rx="5.6" fill="#d4d4d4" stroke="#b0b0b0" stroke-width="1"/>
<path d="M0.8 15.6 v0.6 a9.2 9.2 0 0 0 18.4 0 v-0.6 M10 25.4 V30.6" fill="none" stroke="#b0b0b0" stroke-width="1.15"/>
</svg>
<span class="t" style="left:1135.80px;top:122.01px;font-size:11.6px;line-height:11.6px;color:#b0b0b0;transform:scaleX(1.0521);">Dictate</span>
<svg style="left:1151.8px;top:143px;" width="6.2" height="4" viewBox="0 0 6.2 4"><path d="M0.3 0.5 L3.1 3 L5.9 0.5" fill="none" stroke="#b8b8b8" stroke-width="1.1"/></svg>
<span class="t" style="left:1140.30px;top:162.01px;font-size:11.6px;line-height:11.6px;color:#242424;transform:scaleX(0.9538);">Voice</span>
<div style="left:1183px;top:83px;width:1px;height:89px;background:#d1d1d1;"></div>
<svg style="left:1196px;top:84px;" width="34" height="34" viewBox="0 0 34 34">
<path d="M20.2 12.2 H31 M15.4 19.3 H26 M11 26.2 H21" stroke="#185abd" stroke-width="4.2" stroke-linecap="round"/>
<path d="M18.2 5.2 L21.6 2 L25.6 5.4 L10.4 27.4 L2 31.8 L3.6 23.4 Z" fill="#f7f7f7" stroke="#185abd" stroke-width="1.4" stroke-linejoin="round"/>
<path d="M21.6 2 L25.6 5.4 L22.8 9.4 L17.6 5.6 Z" fill="#185abd" stroke="#185abd" stroke-width="1" stroke-linejoin="round"/>
<path d="M2 31.8 L2.7 28.4 L5 30.2 Z" fill="#185abd"/>
</svg>
<span class="t" style="left:1196.60px;top:122.01px;font-size:11.6px;line-height:11.6px;color:#242424;transform:scaleX(1.0620);">Editor</span>
<span class="t" style="left:1196.60px;top:162.01px;font-size:11.6px;line-height:11.6px;color:#242424;transform:scaleX(1.0620);">Editor</span>
<div style="left:1241px;top:83px;width:1px;height:89px;background:#d1d1d1;"></div>
<svg style="left:1259px;top:87px;" width="28" height="28" viewBox="0 0 28 28">
<rect x="0.75" y="0.75" width="26.5" height="26.5" fill="none" stroke="#d83b01" stroke-width="1.5"/>
<rect x="3.5" y="3.5" width="9" height="9" fill="none" stroke="#d83b01" stroke-width="1"/>
<rect x="15.5" y="3.5" width="9" height="9" fill="none" stroke="#d83b01" stroke-width="1"/>
<rect x="3.5" y="15.5" width="9" height="9" fill="none" stroke="#d83b01" stroke-width="1"/>
<rect x="15.5" y="15.5" width="9" height="9" fill="none" stroke="#d83b01" stroke-width="1"/>
</svg>
<span class="t" style="left:1251.80px;top:122.01px;font-size:11.6px;line-height:11.6px;color:#242424;transform:scaleX(1.0881);">Add-ins</span>
<span class="t" style="left:1251.80px;top:162.01px;font-size:11.6px;line-height:11.6px;color:#242424;transform:scaleX(1.0881);">Add-ins</span>
<div style="left:1304px;top:83px;width:1px;height:89px;background:#d1d1d1;"></div>
<svg style="left:1338.5px;top:161.5px;" width="11" height="7" viewBox="0 0 11 7"><path d="M0.5 0.7 L5.3 5.6 L10.1 0.7" fill="none" stroke="#242424" stroke-width="1.1"/></svg>
</section>
<footer id="statusbar" style="left:0;top:0;width:1366px;height:768px">
<div style="left:0px;top:706px;width:1366px;height:22px;background:#f3f3f3;"></div>
<div style="left:0px;top:706px;width:1366px;height:1px;background:#f8f8f8;"></div>
<div style="left:0px;top:727px;width:1366px;height:1px;background:#fdfdfd;"></div>
<span class="t" style="left:11.70px;top:711.01px;font-size:11.6px;line-height:11.6px;color:#2b2b2b;transform:scaleX(0.9595);">Page 53 of 55</span>
<span class="t" style="left:99.60px;top:711.01px;font-size:11.6px;line-height:11.6px;color:#2b2b2b;transform:scaleX(0.9887);">5281 words</span>
<svg style="left:177.5px;top:710.5px;" width="15" height="14" viewBox="0 0 15 14"><path d="M6.8 5.2 V2 C6.8 1.2 6.2 0.7 5.4 0.7 H0.7 V12.1 H5.4 C6.2 12.1 6.8 11.6 6.8 10.8 V8.6" fill="none" stroke="#2b2b2b" stroke-width="1.15"/><path d="M6.8 2 C6.8 1.2 7.4 0.7 8.2 0.7 H13.3 V5.2" fill="none" stroke="#2b2b2b" stroke-width="1.15"/><path d="M7.6 6.6 L14.4 13.2 M14.4 6.6 L7.6 13.2" stroke="#2b2b2b" stroke-width="1.05"/></svg>
<span class="t" style="left:209.60px;top:711.01px;font-size:11.6px;line-height:11.6px;color:#2b2b2b;transform:scaleX(0.9823);">English (United States)</span>
<span class="t" style="left:343.50px;top:711.01px;font-size:11.6px;line-height:11.6px;color:#2b2b2b;transform:scaleX(0.9785);">Text Predictions: On</span>
<svg style="left:465.5px;top:710.5px;" width="15" height="14" viewBox="0 0 15 14">
<circle cx="6.4" cy="1.9" r="1.9" fill="none" stroke="#2b2b2b" stroke-width="1.1"/>
<path d="M4.2 4 C2.4 2.4 0.4 3 0.9 4.2 C1.2 5 3 5.4 3.9 5.8 C4.2 8 3.4 10.4 2.9 11.8 C2.7 13.2 4.6 13.4 5 12.2 L6.2 9.4" fill="none" stroke="#2b2b2b" stroke-width="1.1" stroke-linecap="round" stroke-linejoin="round"/>
<path d="M8.6 4 C10.4 2.4 12.4 3 11.9 4.2 C11.6 5 10.2 5.4 9 5.7 M4.2 4 C5.6 5 7.2 5 8.6 4" fill="none" stroke="#2b2b2b" stroke-width="1.1" stroke-linecap="round"/>
<circle cx="6.5" cy="9.2" r="0.9" fill="#2b2b2b"/>
<path d="M8 7 L14.2 13 M14.2 7 L8 13" stroke="#2b2b2b" stroke-width="1.05"/>
</svg>
<span class="t" style="left:483.60px;top:711.01px;font-size:11.6px;line-height:11.6px;color:#1f1f1f;transform:scaleX(1.0105);-webkit-text-stroke:0.45px #1f1f1f;">Accessibility: Investigate</span>
<svg style="left:1007px;top:710px;" width="14" height="14" viewBox="0 0 14 14">
<path d="M0.5 3.5V0.5h3 M10.5 0.5h3v3 M13.5 10.5v3h-3 M3.5 13.5h-3v-3" fill="none" stroke="#262626" stroke-width="1.1"/>
<path d="M3.5 2.5h4.2l2.8 2.8v6.2h-7z M7.5 2.7v2.8h2.8" fill="none" stroke="#262626" stroke-width="1.05"/>
</svg>
<span class="t" style="left:1023.70px;top:712.01px;font-size:11.6px;line-height:11.6px;color:#2b2b2b;transform:scaleX(0.9746);">Focus</span>
<svg style="left:1079px;top:710px;" width="13" height="13" viewBox="0 0 13 13">
<path d="M6.5 1.6 C5 0.5 2.4 0.4 0.5 0.9 V10.9 C2.4 10.4 5 10.5 6.5 11.8 C8 10.5 10.6 10.4 12.5 10.9 V0.9 C10.6 0.4 8 0.5 6.5 1.6 Z M6.5 1.6V11.8" fill="none" stroke="#262626" stroke-width="1.1" stroke-linejoin="round"/>
<path d="M2.2 3.5h2.8 M2.2 5.5h2.8 M2.2 7.5h2.8 M2.2 9.5h2.8 M8 3.5h2.8 M8 5.5h2.8 M8 7.5h2.8 M8 9.5h2.8" stroke="#262626" stroke-width="0.95"/>
</svg>
<div style="left:1106px;top:707px;width:40px;height:20px;background:#dadada;"></div>
<svg style="left:1120px;top:710px;" width="12" height="14" viewBox="0 0 12 14"><rect x="0.55" y="0.55" width="10.4" height="12.6" fill="#fff" stroke="#262626" stroke-width="1.1"/><path d="M2.5 3.5h6.5 M2.5 5.5h6.5 M2.5 7.5h6.5 M2.5 9.5h6.5 M2.5 11.5h6.5" stroke="#262626" stroke-width="1"/></svg>
<svg style="left:1159px;top:710px;" width="15" height="15" viewBox="0 0 15 15">
<path d="M11.5 4.6V0.5H0.5v11.8h4.6" fill="none" stroke="#262626" stroke-width="1.1"/>
<path d="M2.4 3.5h7.2 M2.4 5.5h7.2 M2.4 7.5h3.2 M2.4 9.5h2.6" stroke="#262626" stroke-width="1"/>
<circle cx="9.7" cy="8.9" r="4.1" fill="#f3f3f3" stroke="#262626" stroke-width="1.1"/>
<path d="M5.6 8.9h8.2 M9.7 4.8 C7.7 7 7.7 10.8 9.7 13 C11.7 10.8 11.7 7 9.7 4.8" fill="none" stroke="#262626" stroke-width="0.95"/>
</svg>
<div style="left:1192.3px;top:716.6px;width:7.6px;height:1px;background:#3b3b3b;"></div>
<div style="left:1205px;top:716.6px;width:100px;height:1px;background:#5e5e5e;"></div>
<div style="left:1255.2px;top:714.6px;width:1px;height:5px;background:#5e5e5e;"></div>
<div style="left:1232.2px;top:711.4px;width:4.8px;height:11.4px;background:#4a4a4a;"></div>
<div style="left:1310px;top:716.6px;width:7.8px;height:1px;background:#3b3b3b;"></div>
<div style="left:1313.4px;top:713.2px;width:1px;height:7.8px;background:#3b3b3b;"></div>
<span class="t" style="left:1330.60px;top:711.01px;font-size:11.6px;line-height:11.6px;color:#2b2b2b;transform:scaleX(0.9508);">60%</span>
</footer>
<nav id="taskbar" style="left:0;top:0;width:1366px;height:768px">
<div style="left:0px;top:728px;width:1366px;height:40px;background:linear-gradient(90deg,#2c2e2f 0px,#2a2d2f 420px,#23282d 620px,#1d2329 800px,#1b2028 1000px,#1b2129 1366px);"></div>
<div style="left:0px;top:728px;width:48px;height:40px;background:#1f2020;"></div>
<svg style="left:16px;top:739.5px;" width="17" height="17" viewBox="0 0 17 17"><path d="M0 2.4 L7.2 1.4 V7.9 H0 Z M8.1 1.3 L16.6 0 V7.9 H8.1 Z M0 8.8 H7.2 V15.3 L0 14.3 Z M8.1 8.8 H16.6 V16.7 L8.1 15.4 Z" fill="#fff"/></svg>
<div style="left:48px;top:728px;width:344px;height:40px;background:#f3f3f3;border-top:1px solid #c9c9c9;border-bottom:1px solid #bdbdbd;"></div>
<svg style="left:59.5px;top:739.5px;" width="18" height="18" viewBox="0 0 18 18"><circle cx="10.8" cy="6.2" r="5.4" fill="none" stroke="#2b2b2b" stroke-width="1.25"/><path d="M7 10.2 L0.8 16.6" stroke="#2b2b2b" stroke-width="1.3" stroke-linecap="round"/></svg>
<span class="t" style="left:87.80px;top:741.00px;font-size:15px;line-height:15px;color:#2a2a2a;transform:scaleX(0.9636);">Type here to search</span>
<svg style="left:407px;top:739px;" width="18" height="17" viewBox="0 0 18 17">
<rect x="1.6" y="5" width="9.8" height="6.8" fill="none" stroke="#fff" stroke-width="1.1"/>
<path d="M1.1 0.8V2.7H11.9V0.8 M1.1 16V14.1H11.9V16" fill="none" stroke="#fff" stroke-width="1.1"/>
<path d="M15.4 0.8V4.6 M15.4 8.6V16" stroke="#fff" stroke-width="1.1"/>
<rect x="14" y="5" width="2.9" height="2.9" fill="#fff"/>
</svg>
<svg style="left:451px;top:738.5px;" width="22" height="19" viewBox="0 0 22 19">
<path d="M0.2 1.4a1 1 0 0 1 1-1h6.6l1.6 1.9H0.2z" fill="#e8a317"/>
<path d="M0.2 2.3h20.6a0.8 0.8 0 0 1 .8 .8v13.2a0.8 0.8 0 0 1-.8 .8H1a0.8 0.8 0 0 1-.8-.8z" fill="#ffd869"/>
<path d="M4.4 18.2v-7a1 1 0 0 1 1-1h11a1 1 0 0 1 1 1v7h-3.6v-4.2H8v4.2z" fill="#3a9be6"/>
</svg>
<svg style="left:489px;top:736px;" width="24" height="24" viewBox="0 0 24 24">
<rect x="10.6" y="0.8" width="11" height="8.6" fill="#c8c8c8" stroke="#8c8c8c" stroke-width="0.6"/>
<rect x="12" y="2" width="8.2" height="6" fill="#0a10e0"/>
<path d="M14.6 9.6h8.4l-1.4 2.6h-6.6z" fill="#d8d8d8" stroke="#9a9a9a" stroke-width="0.5"/>
<rect x="3" y="11.8" width="9.6" height="8" fill="#c8c8c8" stroke="#8c8c8c" stroke-width="0.6"/>
<rect x="4.2" y="13" width="7.2" height="5.6" fill="#0a10e0"/>
<path d="M0.6 20.2h14.2l-1 2.9H1.6z" fill="#d8d8d8" stroke="#9a9a9a" stroke-width="0.5"/>
<path d="M17.6 3.4 L9.6 10.2 L12.8 10.6 L6 17.2 L15.2 9.6 L12 9.2 Z" fill="#ffe81a" stroke="#c8a800" stroke-width="0.4"/>
</svg>
<svg style="left:527.5px;top:736.5px;" width="24" height="24" viewBox="0 0 24 24">
<path d="M6.4 6V3.4a2.4 2.4 0 0 1 2.4-2.4h6.4a2.4 2.4 0 0 1 2.4 2.4V6" fill="none" stroke="#2aa9f0" stroke-width="1.6"/>
<path d="M0.6 4.6h22.8v15.2a3.4 3.4 0 0 1-3.4 3.4H4a3.4 3.4 0 0 1-3.4-3.4z" fill="#f4f4f4"/>
<rect x="7.6" y="9.6" width="3.7" height="3.7" fill="#f25022"/><rect x="12.6" y="9.6" width="3.7" height="3.7" fill="#7fba00"/>
<rect x="7.6" y="14.6" width="3.7" height="3.7" fill="#00a4ef"/><rect x="12.6" y="14.6" width="3.7" height="3.7" fill="#ffb900"/>
</svg>
<div style="left:567px;top:736px;width:24px;height:24px;background:#4a4a4a;border-radius:2px;"></div>
<svg style="left:572.5px;top:740px;" width="13" height="16" viewBox="0 0 13 16"><path d="M0.4 3.8 L12.4 0 V4.6 L4.6 7.2 L12.4 9.6 V12.4 L0.4 16 V11.4 L8.2 8.9 L0.4 6.4 Z" fill="#ff9800"/><path d="M0.4 6.4 L8.2 8.9 L4.6 7.2 L12.4 9.6 V12.4 L0.4 8.4Z" fill="#e07c00" opacity=".55"/></svg>
<div style="left:564px;top:766px;width:30px;height:2px;background:#76b9ed;"></div>
<svg style="left:604.5px;top:736.5px;" width="25" height="23" viewBox="0 0 25 23">
<path d="M3 6.6 L13.8 0.4 L24.6 6.6 V20.4 a2 2 0 0 1-2 2 H5 a2 2 0 0 1-2-2 Z" fill="#1490df"/>
<path d="M13.8 0.4 L24.6 6.6 L13.8 13 Z" fill="#28a8ea"/>
<path d="M24.6 6.6 V11 L14 17 V10.8 Z" fill="#0a4fa8"/>
<path d="M3 17.4 L24.6 11 V20.4 a2 2 0 0 1-2 2 H5 a2 2 0 0 1-2-2 Z" fill="#35c0f4"/>
<rect x="0.4" y="4.8" width="14.4" height="13.6" rx="1" fill="#0f6cbd"/>
<ellipse cx="7.6" cy="11.6" rx="3.5" ry="3.9" fill="none" stroke="#fff" stroke-width="1.7"/>
</svg>
<svg style="left:643.5px;top:736.5px;" width="23" height="23" viewBox="0 0 23 23">
<circle cx="11.4" cy="11.4" r="11.2" fill="#1ed760"/>
<path d="M4.6 8.4 C9 6.6 14.8 7 19 9.6" fill="none" stroke="#0c0c0c" stroke-width="2.2" stroke-linecap="round"/>
<path d="M5.2 12.2 C9.2 10.8 14 11.2 17.8 13.4" fill="none" stroke="#0c0c0c" stroke-width="1.8" stroke-linecap="round"/>
<path d="M5.8 15.8 C9.2 14.8 13.2 15 16.4 17" fill="none" stroke="#0c0c0c" stroke-width="1.5" stroke-linecap="round"/>
</svg>
<svg style="left:681px;top:736px;" width="24" height="24" viewBox="0 0 24 24">
<circle cx="12" cy="12" r="12" fill="#fbbc04"/>
<path d="M12 12 L1.61 6 A12 12 0 0 1 22.39 6 Z" fill="#ea4335"/>
<path d="M12 12 L1.61 6 A12 12 0 0 0 12 24 Z" fill="#34a853"/>
<path d="M12 12 L22.39 6 H12 Z" fill="#ea4335"/>
<path d="M12 12 L12 24 L17.2 15 Z" fill="#fbbc04"/>
<path d="M12 12 L1.61 6 L6.8 15 Z" fill="#34a853"/>
<circle cx="12" cy="12" r="5.9" fill="#fff"/>
<circle cx="12" cy="12" r="4.7" fill="#4285f4"/>
</svg>
<div style="left:679px;top:766px;width:29px;height:2px;background:#76b9ed;"></div>
<svg style="left:719px;top:736px;" width="24" height="24" viewBox="0 0 24 24">
<defs><linearGradient id="eg1" x1="0" y1="0" x2="1" y2="0.6"><stop offset="0" stop-color="#2fb5e0"/><stop offset="0.55" stop-color="#35c6b0"/><stop offset="1" stop-color="#6bd64a"/></linearGradient>
<linearGradient id="eg2" x1="0" y1="0" x2="0.6" y2="1"><stop offset="0" stop-color="#1f8fe0"/><stop offset="1" stop-color="#0c59a4"/></linearGradient></defs>
<circle cx="12" cy="12" r="12" fill="url(#eg1)"/>
<path d="M0 12.6 C0.6 6 6 3.8 10.6 5 C14.6 6 16 9.4 15.2 11.2 C14.2 9 11.6 8 9.6 9 C6.6 10.6 7 15.6 10.4 18.6 C13.6 21.4 19 20.8 22.6 17.6 C20.6 21.6 16.6 24 12 24 C5.4 24 0 18.8 0 12.6 Z" fill="url(#eg2)"/>
<path d="M9.6 9 C6.6 10.6 7 15.6 10.4 18.6 C12.6 20.6 16 21 19 19.8 C15 20.6 11.4 18.4 10.8 14.8 C10.4 12.2 11.8 10 14.4 10.2 C13.2 8.8 11.2 8.2 9.6 9 Z" fill="#0a4a90"/>
</svg>
<svg style="left:756.5px;top:735.5px;" width="25" height="25" viewBox="0 0 25 25">
<path d="M18.2 0.4 L24.6 3.4 V21.6 L18.2 24.6 Z" fill="#2aabee"/>
<path d="M18.2 0.4 L3.6 14.2 L0.6 12 L18.2 5.8 Z" fill="#0078c8" opacity="0"/>
<path d="M18.2 0.4 V6.6 L3.4 17.8 L0.8 15.6 a1 1 0 0 1 0-1.4 Z" fill="#0a84d6"/>
<path d="M18.2 24.6 V18.4 L3.4 7.2 L0.8 9.4 a1 1 0 0 0 0 1.4 Z" fill="#0078c8"/>
<path d="M18.2 6.6 L11 12.5 L18.2 18.4 Z" fill="#1b2027"/>
</svg>
<div style="left:755px;top:766px;width:29px;height:2px;background:#76b9ed;"></div>
<svg style="left:798px;top:738.5px;" width="15" height="21" viewBox="0 0 15 21">
<path d="M1 0.6h10.6v10.8l2.6 2.2v6H3z" fill="#f3cf62"/>
<path d="M0.6 0.6 L4.4 3.4 V20.4 L0.6 17.6 Z" fill="#fbe7a4"/>
<path d="M4.4 3.4 V20 H14.2 V13.6 L11.6 11.4 V0.6 H1" fill="none" stroke="#d9b13a" stroke-width="0.5"/>
</svg>
<div style="left:793px;top:766px;width:20px;height:2px;background:#76b9ed;"></div>
<div style="left:813px;top:766px;width:9px;height:2px;background:#5a93c2;"></div>
<svg style="left:834.5px;top:739px;" width="22" height="20" viewBox="0 0 22 20">
<defs>
<linearGradient id="pb" x1="0" y1="0" x2="0" y2="1"><stop offset="0" stop-color="#3a62c8"/><stop offset="0.45" stop-color="#6f93e0"/><stop offset="0.85" stop-color="#fff"/></linearGradient>
<linearGradient id="po" x1="0" y1="0" x2="0" y2="1"><stop offset="0" stop-color="#f59a1c"/><stop offset="0.45" stop-color="#f8bb6a"/><stop offset="0.85" stop-color="#fff"/></linearGradient>
<linearGradient id="pg" x1="0" y1="0" x2="0" y2="1"><stop offset="0" stop-color="#2e9e3a"/><stop offset="0.45" stop-color="#63bf6c"/><stop offset="0.85" stop-color="#fff"/></linearGradient>
<linearGradient id="pr" x1="0" y1="0" x2="0" y2="1"><stop offset="0" stop-color="#e2262c"/><stop offset="0.45" stop-color="#ee7377"/><stop offset="0.85" stop-color="#fff"/></linearGradient>
</defs>
<path d="M5.6 4 a1.9 1.9 0 1 1 3.8 0 a1.9 1.9 0 0 1-.6 1.4 C10 6 10.4 7 10.4 8.4 V14.6 H4.6 V8.4 C4.6 7 5 6 6.2 5.4 A1.9 1.9 0 0 1 5.6 4Z" fill="url(#po)"/>
<path d="M15.4 4 a1.9 1.9 0 1 1 3.8 0 a1.9 1.9 0 0 1-.6 1.4 C19.8 6 20.2 7 20.2 8.4 V14.6 H14.4 V8.4 C14.4 7 14.8 6 16 5.4 A1.9 1.9 0 0 1 15.4 4Z" fill="url(#pr)"/>
<path d="M1 7.6 a1.8 1.8 0 1 1 3.6 0 a1.8 1.8 0 0 1-.6 1.3 C5.2 9.5 5.6 10.5 5.6 11.8 V18.8 H0.2 V11.8 C0.2 10.5 .6 9.5 1.6 8.9 A1.8 1.8 0 0 1 1 7.6Z" fill="url(#pb)"/>
<path d="M10.6 7.6 a1.8 1.8 0 1 1 3.6 0 a1.8 1.8 0 0 1-.6 1.3 C14.8 9.5 15.2 10.5 15.2 11.8 V18.8 H9.8 V11.8 C9.8 10.5 10.2 9.5 11.2 8.9 A1.8 1.8 0 0 1 10.6 7.6Z" fill="url(#pg)"/>
</svg>
<div style="left:831px;top:766px;width:29px;height:2px;background:#76b9ed;"></div>
<svg style="left:871px;top:736px;" width="25" height="25" viewBox="0 0 25 25">
<path d="M10.4 1.6 H19 V10 M0.8 13 V19 H8" fill="none" stroke="#4fb52c" stroke-width="1.1" stroke-dasharray="1.2 1.2"/>
<path d="M0.9 1.6 v7.6 a3.5 1.2 0 0 0 7 0 V1.6Z" fill="#f0b400"/>
<path d="M2.2 1.8v8.4" stroke="#ffe37a" stroke-width="1.6"/>
<ellipse cx="4.4" cy="1.6" rx="3.5" ry="1.2" fill="#ffd84a"/>
<path d="M9 12.6 L20.8 23" stroke="#b9c4d0" stroke-width="2.4" stroke-linecap="round"/>
<path d="M7.4 11.4 a2.8 2.8 0 1 0 4 3.4" fill="none" stroke="#9fb0c4" stroke-width="1.8"/>
<path d="M19.6 11.6 L9.2 23" stroke="#e8a81c" stroke-width="2.2" stroke-linecap="round"/>
<path d="M15.6 9.8 L21 14.4 L23.8 13.6 L17.2 8.2 Z" fill="#aab6c4" stroke="#7f8c9c" stroke-width="0.5"/>
</svg>
<div style="left:869px;top:766px;width:29px;height:2px;background:#76b9ed;"></div>
<svg style="left:909px;top:736px;" width="25" height="24" viewBox="0 0 25 24">
<defs><linearGradient id="dp1" x1="0" y1="0" x2="1" y2="1"><stop offset="0" stop-color="#14c8f4"/><stop offset="0.4" stop-color="#3b7bf0"/><stop offset="0.7" stop-color="#a24df5"/><stop offset="1" stop-color="#7a4df5"/></linearGradient>
<linearGradient id="dp2" x1="0" y1="1" x2="1" y2="0"><stop offset="0" stop-color="#ff2fc8"/><stop offset="0.6" stop-color="#f93be0"/><stop offset="1" stop-color="#ff4fd6"/></linearGradient></defs>
<path d="M1.6 0.6 L15.6 0.2 L22 6 L24.2 18.6 L12 23.4 L2.6 21 L0.4 12 Z" fill="url(#dp1)"/>
<path d="M15.6 3 L21.4 1.6 L22.6 9 L24.2 18.6 L12 23.4 L2.6 21 L2 17 L18 17 Z" fill="url(#dp2)" opacity=".92"/>
<path d="M19.4 9 L24 15 L23.2 19.4 L17 20.4 Z" fill="#7a4df5"/>
<rect x="4.3" y="4.3" width="14.9" height="14.6" fill="#0a0a0a"/>
<rect x="6.4" y="15.4" width="5.6" height="1.2" fill="#fff"/>
</svg>
<span class="t" style="left:915.20px;top:741.01px;font-size:8.6px;line-height:8.6px;color:#fff;font-weight:700;transform:scaleX(0.9370);">DP</span>
<div style="left:907px;top:766px;width:29px;height:2px;background:#76b9ed;"></div>
<svg style="left:946.5px;top:736.5px;" width="26" height="24" viewBox="0 0 26 24">
<ellipse cx="12.6" cy="11" rx="11.4" ry="6.6" transform="rotate(-22 12.6 11)" fill="#8a8a8a"/>
<ellipse cx="12.8" cy="9.4" rx="11.4" ry="6.6" transform="rotate(-22 12.8 9.4)" fill="#f2f2f2" stroke="#e0201c" stroke-width="1.3"/>
<path d="M13.4 3.4 L16.4 16 M7.4 9 L17.8 15.2" stroke="#7e7e7e" stroke-width="1" fill="none"/>
<ellipse cx="16.6" cy="19.6" rx="1.9" ry="3.4" transform="rotate(14 16.6 19.6)" fill="none" stroke="#1c96e0" stroke-width="1.4"/>
<ellipse cx="21.2" cy="16.6" rx="1.9" ry="3.4" transform="rotate(-52 21.2 16.6)" fill="none" stroke="#1c96e0" stroke-width="1.4"/>
</svg>
<div style="left:945px;top:766px;width:29px;height:2px;background:#76b9ed;"></div>
<div style="left:979px;top:728px;width:37px;height:40px;background:#484d55;"></div>
<svg style="left:985px;top:737px;" width="24" height="22" viewBox="0 0 24 22">
<rect x="6" y="0" width="18" height="21" rx="1.2" fill="#41a5ee"/>
<rect x="6" y="5.3" width="18" height="5.3" fill="#2b7cd3"/>
<rect x="6" y="10.6" width="18" height="5.3" fill="#185abd"/>
<path d="M6 15.9h18v3.9a1.2 1.2 0 0 1-1.2 1.2H7.2A1.2 1.2 0 0 1 6 19.8z" fill="#103f91"/>
<rect x="0" y="4.6" width="12.6" height="12.6" rx="1.2" fill="#185abd"/>
<path d="M2.4 7.4 L4.3 14.4 L6.3 8.6 L8.3 14.4 L10.2 7.4" fill="none" stroke="#fff" stroke-width="1.5" stroke-linejoin="miter"/>
</svg>
<div style="left:979px;top:766px;width:37px;height:2px;background:#76b9ed;"></div>
<svg style="left:1043.5px;top:736.5px;" width="23" height="23" viewBox="0 0 23 23">
<defs><linearGradient id="wg" x1="0.2" y1="0" x2="0.6" y2="1"><stop offset="0" stop-color="#ffd21f"/><stop offset="0.55" stop-color="#ffa40f"/><stop offset="1" stop-color="#f2610c"/></linearGradient></defs>
<circle cx="10.6" cy="11.4" r="10.2" fill="url(#wg)"/>
<circle cx="16.4" cy="5.2" r="4.9" fill="#d32f2f"/>
</svg>
<span class="t" style="left:1057.80px;top:738.01px;font-size:8.6px;line-height:8.6px;color:#fff;font-weight:700;">1</span>
<span class="t" style="left:1073.42px;top:741.01px;font-size:14.6px;line-height:14.6px;color:#fff;transform:scaleX(0.9386);">31°C</span>
<svg style="left:1128.5px;top:744px;" width="13" height="8" viewBox="0 0 13 8"><path d="M0.8 7.2 L6.4 1.4 L12 7.2" fill="none" stroke="#fff" stroke-width="1.25"/></svg>
<svg style="left:1150px;top:739px;" width="18" height="18" viewBox="0 0 18 18">
<path d="M1 3.2 L16.9 1.1 V15 L1 14.6 Z" fill="none" stroke="#fff" stroke-width="1.3" stroke-linejoin="miter"/>
<path d="M5.2 7.8 a3.6 3.4 0 0 1 6.4-1.6 M11.9 4 v2.4 h-2.4 M12 9.4 a3.6 3.4 0 0 1-6.4 1.6 M5.3 13.2 v-2.4 h2.4" fill="none" stroke="#fff" stroke-width="1.2"/>
<circle cx="13.6" cy="13.5" r="3.7" fill="#ff9b18"/>
</svg>
<svg style="left:1176px;top:744px;" width="16" height="9" viewBox="0 0 16 9"><rect x="0.65" y="0.65" width="12.7" height="7.7" fill="none" stroke="#fff" stroke-width="1.3"/><rect x="13.8" y="2.6" width="1.7" height="3.8" fill="#fff"/><rect x="2.4" y="2.4" width="4" height="4.2" fill="#fff"/></svg>
<svg style="left:1198.5px;top:740.5px;" width="17" height="15" viewBox="0 0 17 15">
<path d="M0.7 5.2h2.4L6.5 1.8V13.4L3.1 9.8H0.7Z" fill="none" stroke="#fff" stroke-width="1.15" stroke-linejoin="round"/>
<path d="M8.8 5.2 a3.6 3.6 0 0 1 0 4.8 M11 3 a6.6 6.6 0 0 1 0 9.2 M13.3 0.8 a9.6 9.6 0 0 1 0 13.6" fill="none" stroke="#fff" stroke-width="1.1"/>
</svg>
<span class="t" style="left:1224.86px;top:742.00px;font-size:12.4px;line-height:12.4px;color:#fff;transform:scaleX(0.8736);">ENG</span>
<span class="t" style="left:1269.88px;top:733.00px;font-size:12px;line-height:12px;color:#fff;transform:scaleX(0.8964);">16:51</span>
<span class="t" style="left:1260.98px;top:751.00px;font-size:12px;line-height:12px;color:#fff;transform:scaleX(1.0022);">10/17/25</span>
<svg style="left:1325px;top:740px;" width="17" height="16" viewBox="0 0 17 16"><path d="M0.6 0.6H15.6V11H7.4L4 14.6V11H0.6Z" fill="#fff"/><path d="M2.8 3.4h10.6 M2.8 5.8h10.6 M2.8 8.2h7" stroke="#1b2129" stroke-width="0.9"/></svg>
<div style="left:1332.5px;top:747.3px;width:16px;height:16px;background:#2b3038;border:1.2px solid #c4c4c4;border-radius:8px;"></div>
<span class="t" style="left:1338.00px;top:750.00px;font-size:10.5px;line-height:10.5px;color:#fff;font-weight:700;">1</span>
</nav>
</body></html>
